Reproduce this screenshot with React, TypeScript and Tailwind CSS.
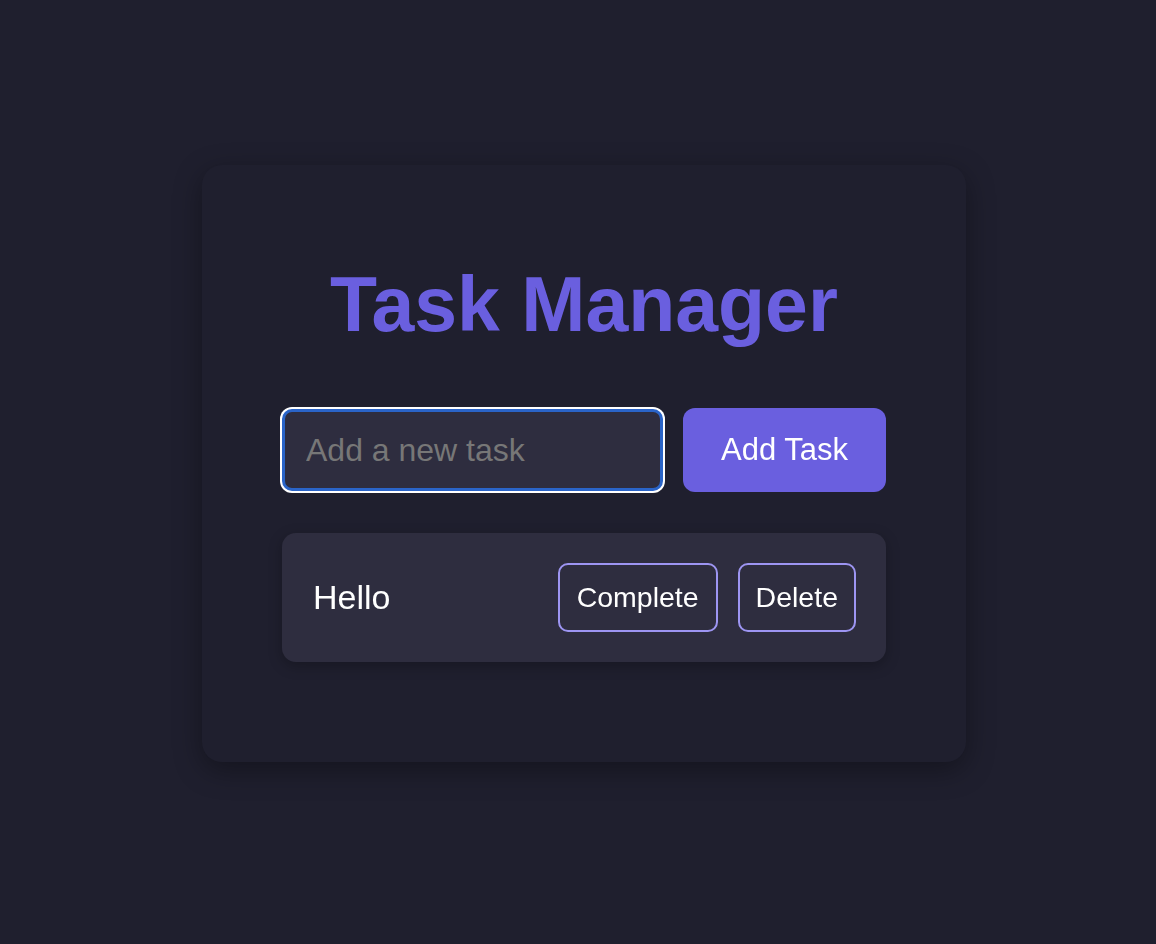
import React, { useState } from 'react'

type Task = { id: number; text: string; done: boolean }

const App: React.FC = () => {
  const [tasks, setTasks] = useState<Task[]>([{ id: 1, text: 'Hello', done: false }])
  const [draft, setDraft] = useState('')

  const addTask = () => {
    if (!draft.trim()) return
    setTasks([...tasks, { id: Date.now(), text: draft.trim(), done: false }])
    setDraft('')
  }

  return (
    <div className="min-h-screen bg-[#1f1f2e] flex justify-center pl-[12px] font-['Liberation_Sans',Arial,sans-serif]">
      <div className="mt-[165px] mb-[40px] w-[764px] self-start rounded-[20px] bg-[#1f1f2e] px-[80px] pt-[96px] pb-[100px] shadow-[0_8px_28px_rgba(0,0,0,0.35)]">
        <h1 className="text-center text-[77px] leading-[87px] font-bold text-[#6a5fdf] mb-[60px]">
          Task Manager
        </h1>

        <div className="flex items-center gap-[20px]">
          <input
            autoFocus
            value={draft}
            onChange={(e) => setDraft(e.target.value)}
            onKeyDown={(e) => e.key === 'Enter' && addTask()}
            placeholder="Add a new task"
            className="flex-1 min-w-0 h-[82px] rounded-[10px] border-[3px] border-[#2a64c8] bg-[#2e2d3f] px-[21px] text-[32px] text-white placeholder:text-[#777777] outline-none ring-2 ring-white"
          />
          <button
            onClick={addTask}
            className="w-[203px] h-[84px] rounded-[12px] bg-[#6a5fdf] text-[31px] text-white"
          >
            Add Task
          </button>
        </div>

        <div className="mt-[41px] flex flex-col gap-4">
          {tasks.map((task) => (
            <div
              key={task.id}
              className="flex items-center h-[129px] rounded-[14px] bg-[#2e2d3f] pl-[31px] pr-[30px] shadow-[0_4px_14px_rgba(0,0,0,0.25)]"
            >
              <span className={`flex-1 text-[34px] text-white ${task.done ? 'line-through opacity-60' : ''}`}>
                {task.text}
              </span>
              <div className="flex gap-[20px]">
                <button
                  onClick={() => setTasks(tasks.map((t) => (t.id === task.id ? { ...t, done: !t.done } : t)))}
                  className="h-[69px] rounded-[10px] border-2 border-[#9d95f2] px-[17px] text-[28.5px] text-white"
                >
                  Complete
                </button>
                <button
                  onClick={() => setTasks(tasks.filter((t) => t.id !== task.id))}
                  className="h-[69px] rounded-[10px] border-2 border-[#9d95f2] px-[16px] text-[28.5px] text-white"
                >
                  Delete
                </button>
              </div>
            </div>
          ))}
        </div>
      </div>
    </div>
  )
}

export default App
